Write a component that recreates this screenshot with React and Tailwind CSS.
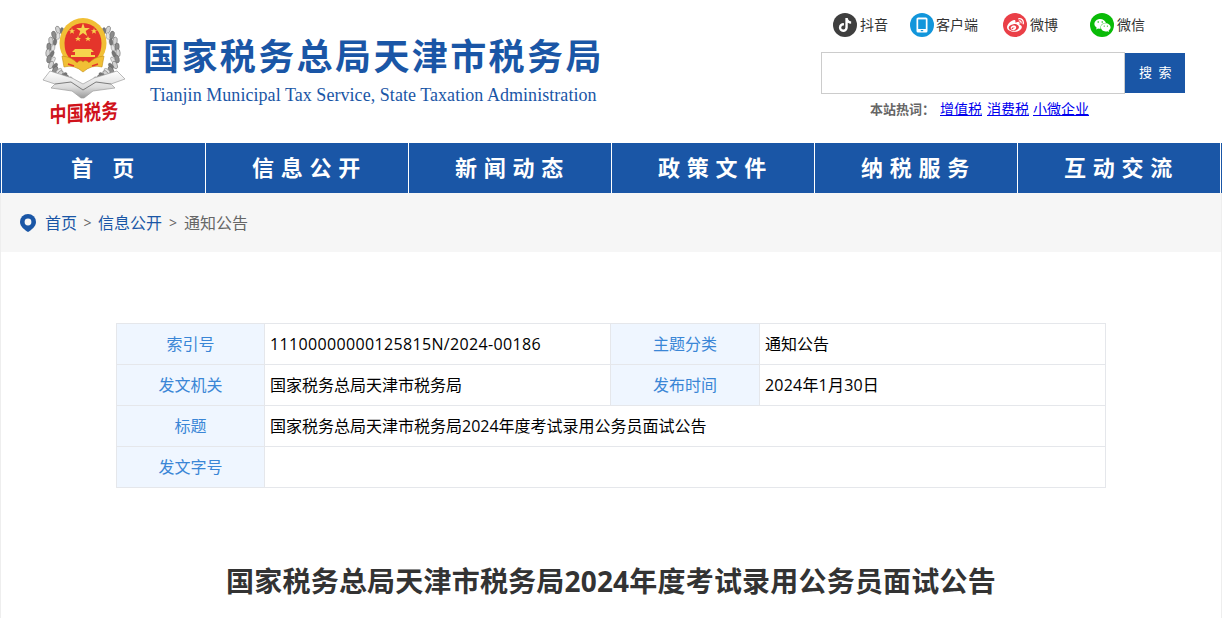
import React from "react";
import { FaTiktok, FaWeibo, FaWeixin } from "react-icons/fa";

const CJK = "font-['Open_Sans','Noto_Sans_CJK_SC',sans-serif]";

const LEAVES = [
  [17, 12, -20], [13, 17, -15], [10, 23, -10], [8, 29, -4], [7, 35, 4], [8, 41, 12], [10, 47, 22], [14, 52, 32], [19, 56, 42], [24, 60, 52],
];

function Emblem() {
  return (
    <svg width="86" height="82" viewBox="0 0 86 82" className="block">
      <defs>
        <linearGradient id="silver" x1="0" y1="0" x2="0" y2="1">
          <stop offset="0" stopColor="#ffffff" />
          <stop offset="0.6" stopColor="#dcdcdc" />
          <stop offset="1" stopColor="#9a9a9a" />
        </linearGradient>
      </defs>
      {LEAVES.map(([x, y, r], i) => (
        <g key={i}>
          <ellipse cx={x} cy={y} rx="2.2" ry="4" transform={`rotate(${r} ${x} ${y})`} fill={i % 2 ? "#8c8c8c" : "#d2d2d2"} stroke="#5f5f5f" strokeWidth="0.5" />
          <ellipse cx={x + 4} cy={y + 1} rx="1.8" ry="3.4" transform={`rotate(${r + 18} ${x + 4} ${y + 1})`} fill={i % 2 ? "#e2e2e2" : "#777"} stroke="#6a6a6a" strokeWidth="0.4" />
          <ellipse cx={84 - x} cy={y} rx="2.2" ry="4" transform={`rotate(${-r} ${84 - x} ${y})`} fill={i % 2 ? "#8c8c8c" : "#d2d2d2"} stroke="#5f5f5f" strokeWidth="0.5" />
          <ellipse cx={80 - x} cy={y + 1} rx="1.8" ry="3.4" transform={`rotate(${-r - 18} ${80 - x} ${y + 1})`} fill={i % 2 ? "#e2e2e2" : "#777"} stroke="#6a6a6a" strokeWidth="0.4" />
        </g>
      ))}
      <path d="M2 62 L9 53 L31 60 L42 66 L53 60 L76 53 L84 61 L70 66 L74 70 L52 73 L43 80 L40 80 L31 73 L10 70 L14 66 Z" fill="url(#silver)" stroke="#9d9d9d" strokeWidth="0.7" />
      <path d="M14 66 L30 64 L42 72 L55 64 L70 66" fill="none" stroke="#7c7c7c" strokeWidth="1" />
      <ellipse cx="42" cy="25" rx="23.5" ry="25" fill="#f1bf35" />
      <path d="M23.500 25 a18.500 20 0 0 1 37 0 C60.500 36 56 44 42 46 C28 44 23.500 36 23.500 25 Z" fill="#e4352b" />
      <path d="M42 5 l1.700 5 h5.200 l-4.200 3 1.600 5 -4.300-3 -4.300 3 1.600-5 -4.200-3 h5.200 z" fill="#f6d44d" />
      <path d="M31 10 l.8 2.200 h2.300 l-1.800 1.400 .7 2.200 -2-1.300 -2 1.300 .7-2.200 -1.800-1.400 h2.300 z M53 10 l.8 2.200 h2.300 l-1.800 1.400 .7 2.200 -2-1.300 -2 1.300 .7-2.200 -1.800-1.400 h2.300 z M37 18 l.8 2 h2.200 l-1.700 1.300 .6 2 -1.900-1.200 -1.900 1.200 .6-2 -1.700-1.300 h2.200 z M47 18 l.8 2 h2.200 l-1.700 1.300 .6 2 -1.900-1.200 -1.900 1.200 .6-2 -1.700-1.300 h2.200 z" fill="#f6d44d" />
      <path d="M34 31 h16 l3 3 h-3 v3 h4 v2 h-24 v-2 h4 v-3 h-3 z" fill="#f6d44d" />
      <path d="M21 38 Q31 39 36 45 Q39 41 42 44 Q45 41 48 45 Q53 39 63 38 L61 49 Q51 46 42 54 Q33 46 23 49 Z" fill="#f1bf35" stroke="#c48f16" strokeWidth="0.6" />
      <path d="M27 46 L33 48 M57 46 L51 48" stroke="#e4352b" strokeWidth="1.400" />
    </svg>
  );
}

const Bubble = ({ className, children }) => (
  <span className={`w-6 h-6 rounded-full flex items-center justify-center ${className}`}>{children}</span>
);

const Label = ({ children }) => <span className="pb-[2px]">{children}</span>;

function Client() {
  return (
    <svg width="14" height="16" viewBox="0 0 14 16">
      <rect x="1.500" y="0.500" width="11" height="15" rx="1.600" fill="#fff" />
      <rect x="3.200" y="2.400" width="7.600" height="9.600" fill="#1296db" />
      <rect x="5.800" y="13" width="2.400" height="1.200" fill="#1296db" />
    </svg>
  );
}

const NAV = [
  { t: "首 页", w: "w-[204px]" },
  { t: "信息公开", w: "w-[203px]" },
  { t: "新闻动态", w: "w-[203px]" },
  { t: "政策文件", w: "w-[203px]" },
  { t: "纳税服务", w: "w-[203px]" },
  { t: "互动交流", w: "w-[204px] border-r border-white" },
];

const th = "border border-[#e5e7eb] bg-[#eff6ff] text-[#3a86d6] font-normal text-[16px] leading-[22px] text-center align-middle p-0";
const td = "border border-[#e5e7eb] text-[#000] font-normal text-[16px] leading-[22px] text-left align-middle px-[5px] py-0";

export default function App() {
  return (
    <div className={`w-[1222px] h-[618px] overflow-hidden bg-white ${CJK}`}>
      <header className="flex h-[143px]">
        <div className="w-[143px] pl-[41px] pt-[18px] flex flex-col items-start">
          <Emblem />
          <div className="w-[86px] mt-[1px] text-center text-[#d0121b] text-[17px] leading-[24px] font-bold tracking-[0.3px] whitespace-nowrap scale-y-125 -skew-y-3">中国税务</div>
        </div>
        <div className="w-[678px] pt-[35px]">
          <div className="text-[#1a56a6] text-[36px] leading-[44px] font-bold tracking-[2.4px] whitespace-nowrap">国家税务总局天津市税务局</div>
          <div className="pl-[7px] mt-[3px] text-[#1a56a6] text-[18px] leading-[26px] font-['Liberation_Serif',serif] tracking-[0.05px] whitespace-nowrap">Tianjin Municipal Tax Service, State Taxation Administration</div>
        </div>
        <div className="w-[364px] flex flex-col pt-[13px]">
          <div className="flex h-[24px] items-center text-[14px] text-[#333] whitespace-nowrap">
            <span className="ml-[12px] flex items-center gap-[3px]"><Bubble className="bg-[#3f3f3f]"><FaTiktok size={14} color="#fff" /></Bubble><Label>抖音</Label></span>
            <span className="ml-[22px] flex items-center gap-[2px]"><Bubble className="bg-[#1296db]"><Client /></Bubble><Label>客户端</Label></span>
            <span className="ml-[25px] flex items-center gap-[3px]"><Bubble className="bg-[#ea3f47]"><FaWeibo size={17} color="#fff" /></Bubble><Label>微博</Label></span>
            <span className="ml-[32px] flex items-center gap-[3px]"><Bubble className="bg-[#09bb07]"><FaWeixin size={17} color="#fff" /></Bubble><Label>微信</Label></span>
          </div>
          <div className="flex mt-[15px] h-[42px]">
            <div className="w-[304px] h-[42px] border border-[#cccccc] bg-white" />
            <div className="w-[60px] h-[40px] mt-px bg-[#1a56a6] text-white text-[13px] pl-[2px] flex items-center justify-center tracking-[1.5px]">搜 索</div>
          </div>
          <div className="mt-[5px] pl-[49px] text-[14px] leading-[20px] whitespace-nowrap flex">
            <span className="font-bold text-[#666] text-[13px] w-[70px]">本站热词：</span>
            <a className="text-[#0000ee] underline">增值税</a>
            <a className="ml-[5px] text-[#0000ee] underline">消费税</a>
            <a className="ml-[4px] text-[#0000ee] underline">小微企业</a>
          </div>
        </div>
      </header>

      <nav className="pl-[1px] flex h-[50px] bg-[#1a56a6]">
        {NAV.map((n, i) => (
          <div key={i} className={`${n.w} border-l border-white flex items-center justify-center text-white text-[22px] font-bold tracking-[6.7px] pl-[5px] pb-[2px] whitespace-nowrap`}>
            {n.t}
          </div>
        ))}
      </nav>

      <div className="border-x border-[#eeeeee] h-[425px]">
        <div className="h-[59px] bg-[#f6f6f6] flex items-center pl-[19px] text-[16px] whitespace-nowrap">
          <svg width="16" height="18" viewBox="0 0 16 18" className="mr-[9px]">
            <path d="M8 0a8 8 0 0 0-8 8c0 4.400 4.600 8 8 10 3.400-2 8-5.600 8-10a8 8 0 0 0-8-8z" fill="#1a56a6" />
            <circle cx="8" cy="8" r="3.400" fill="#f6f6f6" />
          </svg>
          <span className="text-[#1a56a6]">首页</span>
          <span className="text-[#666] text-[14px] mx-[6.5px]">&gt;</span>
          <span className="text-[#1a56a6]">信息公开</span>
          <span className="text-[#666] text-[14px] mx-[7px]">&gt;</span>
          <span className="text-[#666]">通知公告</span>
        </div>

        <main className="pt-[71px]">
          <table className="ml-[115px] w-[989px] table-fixed border-collapse">
            <colgroup>
              <col className="w-[148px]" />
              <col className="w-[346px]" />
              <col className="w-[149px]" />
              <col className="w-[346px]" />
            </colgroup>
            <tbody>
              <tr className="h-[41px]">
                <th className={th}>索引号</th>
                <td className={`${td} tracking-[0.35px]`}>11100000000125815N/2024-00186</td>
                <th className={th}>主题分类</th>
                <td className={td}>通知公告</td>
              </tr>
              <tr className="h-[41px]">
                <th className={th}>发文机关</th>
                <td className={td}>国家税务总局天津市税务局</td>
                <th className={th}>发布时间</th>
                <td className={`${td} tracking-[0.2px]`}>2024年1月30日</td>
              </tr>
              <tr className="h-[41px]">
                <th className={th}>标题</th>
                <td className={td} colSpan={3}>国家税务总局天津市税务局2024年度考试录用公务员面试公告</td>
              </tr>
              <tr className="h-[41px]">
                <th className={th}>发文字号</th>
                <td className={td} colSpan={3}></td>
              </tr>
            </tbody>
          </table>
          <h1 className="mt-[71px] text-center text-[28px] leading-[44px] font-bold text-[#333] tracking-[0.2px] whitespace-nowrap">国家税务总局天津市税务局2024年度考试录用公务员面试公告</h1>
        </main>
      </div>
    </div>
  );
}
